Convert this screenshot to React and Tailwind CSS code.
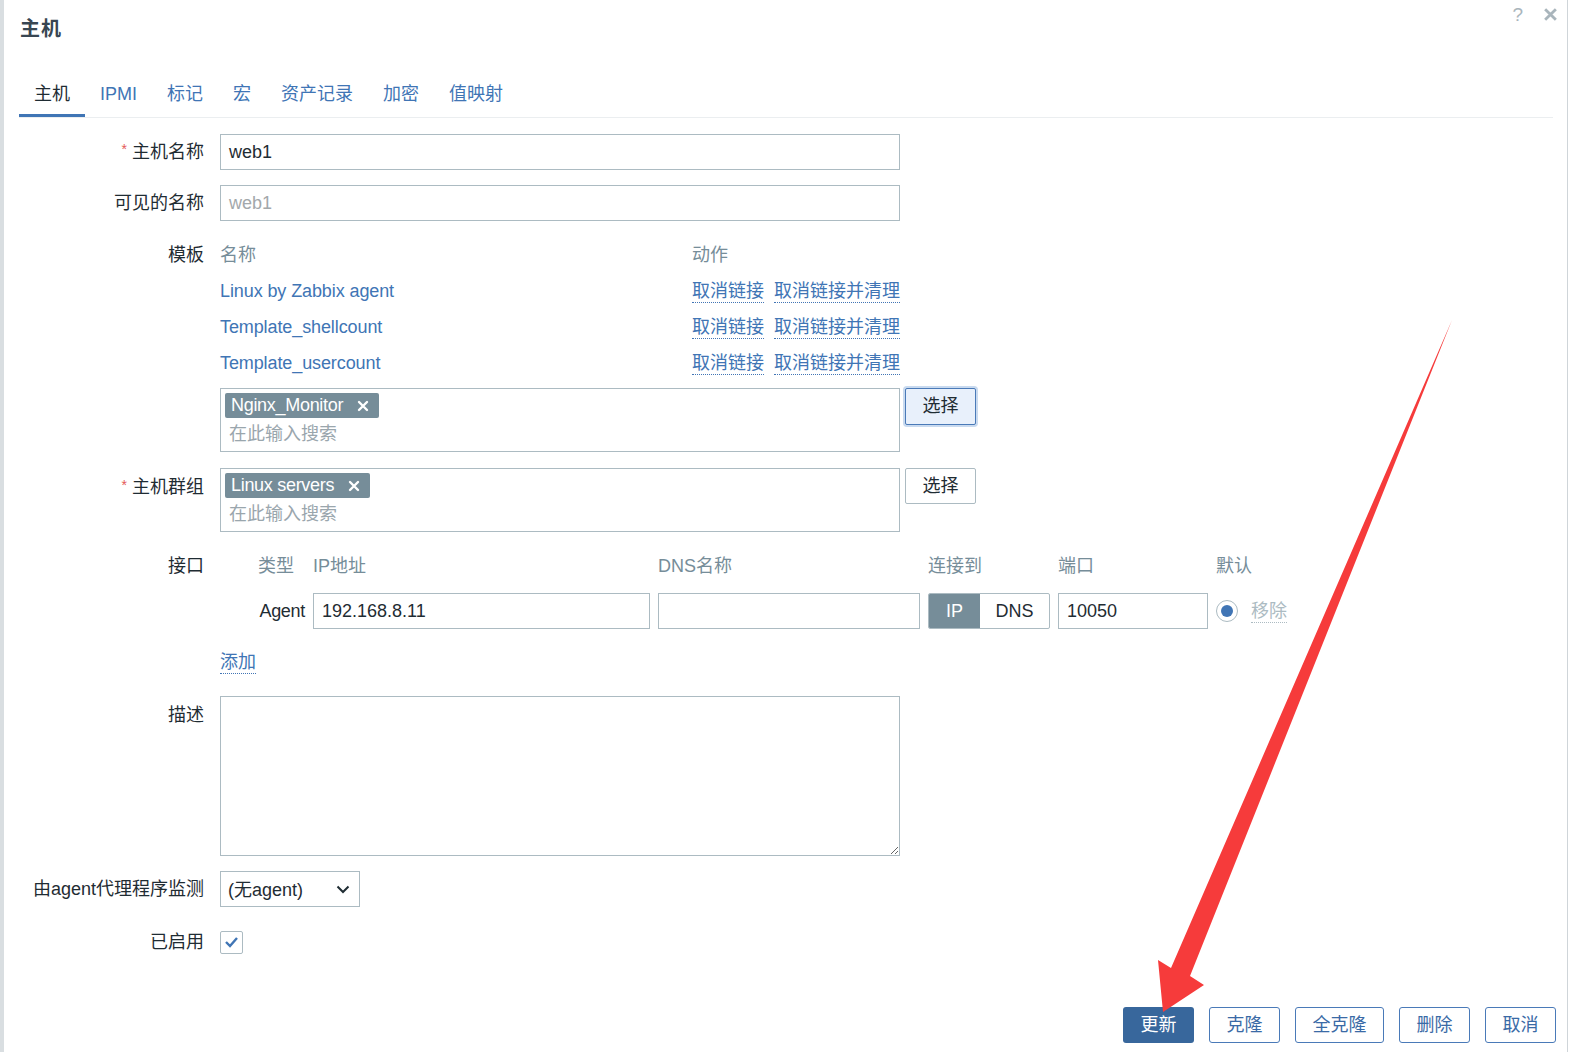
import { useState } from 'react';

const FONT = { fontFamily: '"Liberation Sans", Arial, "Noto Sans CJK SC", sans-serif' };

function Label({ children, required, top }) {
	return (
		<div className={`w-[216px] shrink-0 pr-[16px] text-right text-[#1f2c33] whitespace-nowrap ${top ? 'pt-[6px]' : 'flex items-center justify-end h-[36px]'}`}>
			{required && <span className="text-[#e45959] text-[14px] mr-[5px] relative -top-[3px]">*</span>}
			{children}
		</div>
	);
}

function Tag({ text }) {
	return (
		<span className="inline-flex items-center h-[25px] bg-[#768d99] text-white rounded-[2px] pl-[6px] pr-[10px] tracking-[-0.3px]">
			{text}
			<svg width="12" height="12" viewBox="0 0 12 12" className="ml-[14px]">
				<path d="M2 2 L10 10 M10 2 L2 10" stroke="white" strokeWidth="2.4" strokeLinecap="round" />
			</svg>
		</span>
	);
}

function MultiSelect({ tag, focused }) {
	return (
		<div className="flex items-start gap-[5px]">
			<div className="w-[680px] h-[64px] border border-[#acbbc2] px-[4px] pt-[3px]">
				<Tag text={tag} />
				<div className="text-[#9aa6ad] px-[4px] leading-[30px]">在此输入搜索</div>
			</div>
			{focused ? (
				<button className="w-[71px] h-[37px] border border-[#4a7ab8] rounded-[2px] bg-[#e8f0fb] text-[#1f2c33] shadow-[0_0_0_2px_rgba(100,150,210,0.35)]">选择</button>
			) : (
				<button className="w-[71px] h-[36px] border border-[#acbbc2] rounded-[2px] bg-white text-[#1f2c33]">选择</button>
			)}
		</div>
	);
}

function Dotted({ children, className = '' }) {
	return <span className={`border-b border-dotted border-[#4275b5] leading-[22px] whitespace-nowrap ${className}`}>{children}</span>;
}

export default function App() {
	const [tab] = useState('主机');
	const tabs = ['主机', 'IPMI', '标记', '宏', '资产记录', '加密', '值映射'];
	const templates = ['Linux by Zabbix agent', 'Template_shellcount', 'Template_usercount'];

	return (
		<div style={FONT} className="relative w-[1572px] h-[1052px] bg-white flex text-[18px] text-[#1f2c33] overflow-hidden">
			<div className="w-[4px] bg-[#d9dee1] shrink-0" />
			<div className="flex-1 relative border-r border-[#cfd5d9] mr-[4px]">
				{/* header */}
				<div className="flex items-start justify-between pl-[16px] pr-[9px] pt-[14px] h-[60px]">
					<h1 className="text-[20px] font-bold text-[#384652] tracking-[1px]">主机</h1>
					<div className="flex items-center gap-[20px] text-[#a9b5bc] -mt-[9px]">
						<span className="text-[19px] leading-none">?</span>
						<svg width="15" height="15" viewBox="0 0 14 14"><path d="M2 2 L12 12 M12 2 L2 12" stroke="#a9b5bc" strokeWidth="2.6" /></svg>
					</div>
				</div>

				{/* tabs */}
				<div className="ml-[15px] mr-[14px] flex border-b border-[#ebeef0] h-[58px] items-end">
					{tabs.map(t => (
						<div key={t} className={`px-[15px] h-[58px] flex items-end leading-[21px] ${t === tab ? 'text-[#1f2c33] border-b-[3px] border-[#4075b5] pb-[9px]' : 'text-[#4075b5] pb-[12px]'}`}>
							{t}
						</div>
					))}
				</div>

				{/* form */}
				<div className="pt-[16px]">
					<div className="flex">
						<Label required>主机名称</Label>
						<div className="w-[680px] h-[36px] border border-[#acbbc2] px-[8px] flex items-center">web1</div>
					</div>
					<div className="flex mt-[15px]">
						<Label>可见的名称</Label>
						<div className="w-[680px] h-[36px] border border-[#acbbc2] px-[8px] flex items-center text-[#a3a8ab]">web1</div>
					</div>

					{/* templates */}
					<div className="flex mt-[16px]">
						<Label>模板</Label>
						<div>
							<div className="grid grid-cols-[472px_1fr] w-[680px]">
								<div className="h-[36px] flex items-center text-[#768d99]">名称</div>
								<div className="h-[36px] flex items-center text-[#768d99]">动作</div>
								{templates.map(t => [
									<div key={t} className="h-[36px] flex items-center text-[#4075b5] tracking-[-0.1px]">{t}</div>,
									<div key={t + 'a'} className="h-[36px] flex items-center gap-[10px] text-[#4075b5] whitespace-nowrap">
										<Dotted>取消链接</Dotted>
										<Dotted>取消链接并清理</Dotted>
									</div>,
								])}
							</div>
							<div className="mt-[7px]">
								<MultiSelect tag="Nginx_Monitor" focused />
							</div>
						</div>
					</div>

					<div className="flex mt-[16px]">
						<Label required top>主机群组</Label>
						<MultiSelect tag="Linux servers" />
					</div>

					{/* interfaces */}
					<div className="flex mt-[16px]">
						<Label>接口</Label>
						<div className="pl-[38px]">
							<div className="grid grid-cols-[47px_337px_262px_122px_150px_auto] gap-x-[8px] items-center">
								<div className="h-[36px] flex items-center text-[#768d99]">类型</div>
								<div className="text-[#768d99]">IP地址</div>
								<div className="text-[#768d99]">DNS名称</div>
								<div className="text-[#768d99]">连接到</div>
								<div className="text-[#768d99]">端口</div>
								<div className="text-[#768d99]">默认</div>

								<div className="h-[36px] mt-[9px] flex items-center justify-end tracking-[-0.3px]">Agent</div>
								<div className="h-[36px] mt-[9px] border border-[#acbbc2] px-[8px] flex items-center">192.168.8.11</div>
								<div className="h-[36px] mt-[9px] border border-[#acbbc2]" />
								<div className="h-[36px] mt-[9px] border border-[#acbbc2] rounded-[2px] flex overflow-hidden">
									<div className="w-[51px] bg-[#768d99] text-white flex items-center justify-center">IP</div>
									<div className="flex-1 flex items-center justify-center">DNS</div>
								</div>
								<div className="h-[36px] mt-[9px] border border-[#acbbc2] px-[8px] flex items-center">10050</div>
								<div className="h-[36px] mt-[9px] flex items-center gap-[13px]">
									<span className="w-[22px] h-[22px] rounded-full border border-[#acbbc2] flex items-center justify-center">
										<span className="w-[12px] h-[12px] rounded-full bg-[#4075b5]" />
									</span>
									<span className="text-[#acbbc2] border-b border-dotted border-[#acbbc2] leading-[22px]">移除</span>
								</div>
							</div>
						</div>
					</div>

					<div className="flex mt-[15px]">
						<Label />
						<div className="h-[36px] flex items-center text-[#4075b5]"><Dotted>添加</Dotted></div>
					</div>

					<div className="flex mt-[16px]">
						<Label top>描述</Label>
						<textarea className="w-[680px] h-[160px] border border-[#acbbc2] outline-none resize" />
					</div>

					<div className="flex mt-[15px]">
						<Label>由agent代理程序监测</Label>
						<div className="w-[140px] h-[36px] border border-[#acbbc2] pl-[7px] pr-[9px] flex items-center justify-between">
							<span className="mt-[3px]">(无agent)</span>
							<svg width="14" height="9" viewBox="0 0 14 9"><path d="M1.5 1.5 L7 7 L12.5 1.5" fill="none" stroke="#1f2c33" strokeWidth="2" /></svg>
						</div>
					</div>

					<div className="flex mt-[17px]">
						<Label>已启用</Label>
						<div className="h-[36px] flex items-center">
							<span className="w-[23px] h-[23px] border border-[#acbbc2] rounded-[2px] flex items-center justify-center">
								<svg width="15" height="12" viewBox="0 0 15 12"><path d="M2 6 L6 10 L13 2" fill="none" stroke="#4075b5" strokeWidth="2.4" /></svg>
							</span>
						</div>
					</div>
				</div>

				{/* footer buttons */}
				<div className="absolute right-[11px] bottom-[9px] flex gap-[15px]">
					<button className="w-[71px] h-[36px] rounded-[3px] bg-[#38679c] text-white">更新</button>
					<button className="w-[71px] h-[36px] rounded-[3px] border border-[#4a7ab8] text-[#3a6aa6]">克隆</button>
					<button className="w-[89px] h-[36px] rounded-[3px] border border-[#4a7ab8] text-[#3a6aa6]">全克隆</button>
					<button className="w-[71px] h-[36px] rounded-[3px] border border-[#4a7ab8] text-[#3a6aa6]">删除</button>
					<button className="w-[71px] h-[36px] rounded-[3px] border border-[#4a7ab8] text-[#3a6aa6]">取消</button>
				</div>
			</div>

			{/* annotation arrow */}
			<svg className="absolute inset-0 pointer-events-none" width="1572" height="1052" viewBox="0 0 1572 1052">
				<polygon points="1452,320 1190,976 1204,985 1163,1012 1158,960 1171,968" fill="#f63b3b" />
			</svg>
		</div>
	);
}
